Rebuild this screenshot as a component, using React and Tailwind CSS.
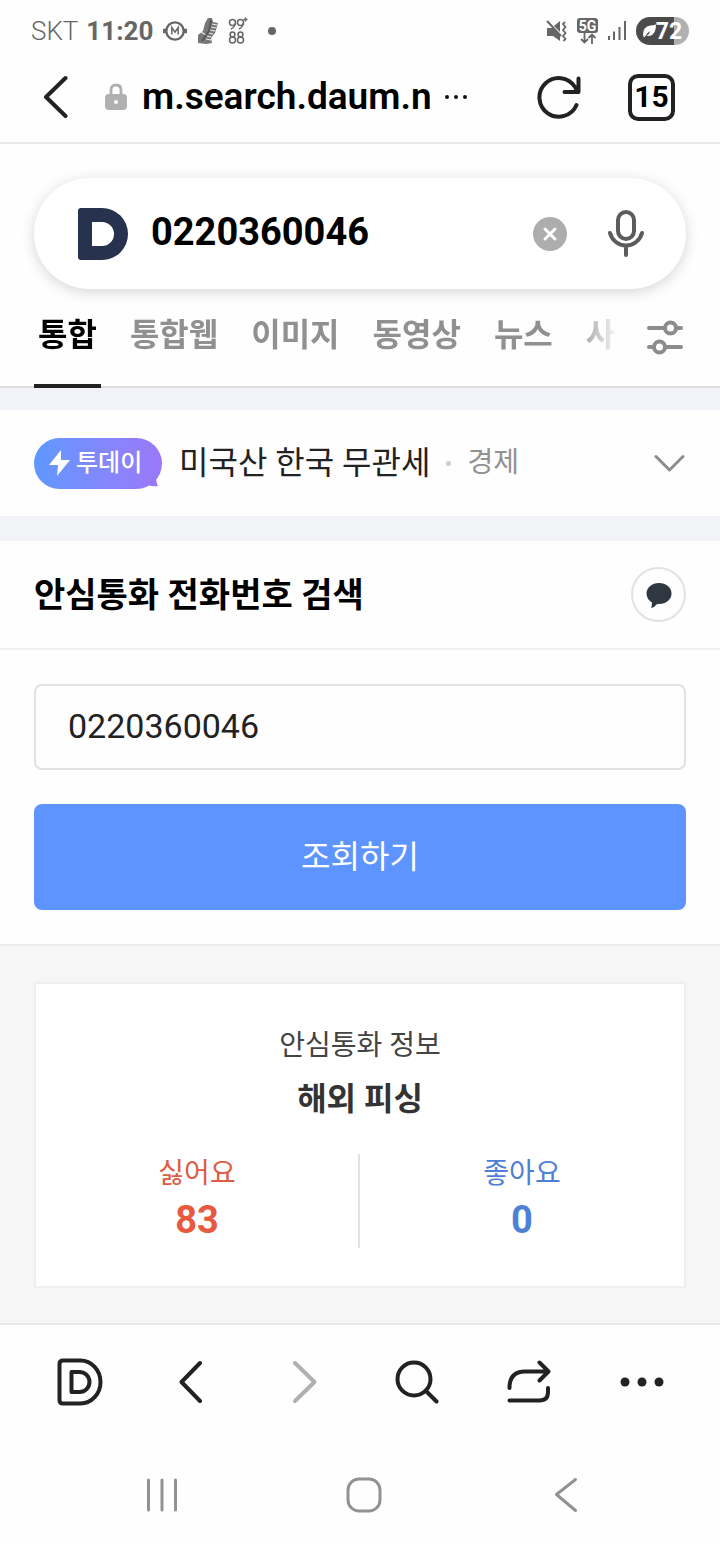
import { useState } from 'react';

const TABS = ['통합', '통합웹', '이미지', '동영상', '뉴스', '사'];

function StatusBar() {
  return (
    <div className="flex h-[62px] items-center justify-between pl-[31px] pr-[31px] text-[#666]">
      <div className="flex items-center gap-[9px] text-[26px] leading-8">
        <span className="flex gap-2">
          <span className="font-light">SKT</span>
          <span className="font-bold">11:20</span>
        </span>
        <svg width="26" height="24" viewBox="0 0 26 24" fill="none" stroke="currentColor">
          <circle cx="13" cy="12" r="8.7" strokeWidth="2.3" />
          <path d="M1 12h3M22 12h3" strokeWidth="4.5" />
          <path d="M9.8 15.5v-7l3.2 4.600 3.200-4.600v7" strokeWidth="1.5" />
        </svg>
        <svg width="22" height="28" viewBox="0 0 22 28">
          <path d="M11 1l4 0 1 4 5 1-3 10-4 5 1 5-6 1-8-1 0-8 5-4 2-8z" fill="#777" />
          <path d="M15 7l5 1M14 10l5 1M13 13l5 1M12 16l4 1M10 19l4 1M9 22l5 1M4 15l5 3" stroke="#e8e8e8" strokeWidth="1.1" fill="none" />
          <path d="M14 3l-2 11-7 10" stroke="#555" strokeWidth="1.800" fill="none" />
        </svg>
        <svg width="21" height="28" viewBox="0 0 21 28" fill="none" stroke="currentColor" strokeWidth="1.5">
          <circle cx="4.5" cy="5.5" r="3" />
          <circle cx="12.5" cy="5.5" r="3" />
          <path d="M7.5 6Q7 10 3 12M15.5 6Q15 10 11 12M15.5 2.5h4M17.500 .5v4" />
          <circle cx="4.500" cy="17.500" r="2.400" />
          <circle cx="12.500" cy="17.500" r="2.400" />
          <circle cx="4.500" cy="23" r="3" />
          <circle cx="12.500" cy="23" r="3" />
        </svg>
        <svg width="28" height="10" viewBox="0 0 28 10">
          <circle cx="14" cy="5" r="4" fill="currentColor" />
        </svg>
      </div>
      <div className="flex items-center gap-[10px]">
        <svg width="21" height="22" viewBox="0 0 21 22" fill="none" stroke="currentColor">
          <path d="M1 8h4l2 0 7 7v6l-7-5H1z" fill="currentColor" stroke="none" />
          <path d="M8 6l6-5v11z" fill="currentColor" stroke="none" />
          <path d="M1 1l14 15" strokeWidth="2" />
          <path d="M19 2l-2 2 2.500 3-2.500 3 2.500 3-2.500 3 2.500 3-2 2" strokeWidth="1.800" />
        </svg>
        <span className="flex flex-col items-center">
          <span className="flex h-[15px] w-[21px] items-center justify-center rounded-[3px] bg-[#666] text-[14px] font-bold leading-none text-white">5G</span>
          <svg width="18" height="11" viewBox="0 0 18 11" fill="none" stroke="currentColor" strokeWidth="1.800">
            <path d="M5.500 0v9M2 6l3.500 3.500L9 6M13 11V2M9.500 5L13 1.500 16.500 5" />
          </svg>
        </span>
        <svg width="18" height="22" viewBox="0 0 18 22" stroke="currentColor" strokeWidth="2">
          <path d="M1 16v4M6 11.500V20M11.500 7v13M17 1v19" />
        </svg>
        <span className="flex h-7 w-[53px] items-center justify-center rounded-full bg-gradient-to-r from-[#4b4b4b] from-72% to-[#b0b0b0] to-72% text-[23px] font-bold leading-none text-white">
          <svg width="13" height="16" viewBox="0 0 14 16">
            <path d="M0 12Q0 3 8 2 11 2 14 1q0 8-4 11-3 2-6 1Q7 11 8 8 4 10 3 13l-2 2z" fill="#fff" />
          </svg>
          72
        </span>
      </div>
    </div>
  );
}

function AddressBar() {
  return (
    <header className="flex h-[82px] items-center border-b-2 border-[#e8e8e8] pb-[10px] pl-[42px] pr-[45px]">
      <button aria-label="뒤로">
        <svg width="26" height="44" viewBox="0 0 26 44" fill="none" stroke="#222" strokeWidth="4" strokeLinecap="round" strokeLinejoin="round">
          <path d="M23.500 3L4 22l19.500 19" />
        </svg>
      </button>
      <button className="ml-[37px] flex min-w-0 flex-1 items-center text-left">
        <svg className="shrink-0" width="22" height="28" viewBox="0 0 22 28">
          <path d="M6 12V7q0-5 5-5t5 5v5" fill="none" stroke="#b0b0b0" strokeWidth="2.800" />
          <rect y="11" width="22" height="16" rx="4" fill="#b0b0b0" />
          <circle cx="11" cy="19" r="2" fill="#fff" />
        </svg>
        <span className="ml-[15px] text-[37px] font-semibold leading-[44px] text-black">m.search.daum.n</span>
        <svg className="ml-3 shrink-0" width="24" height="6" viewBox="0 0 24 6" fill="#111">
          <circle cx="3" cy="3" r="2" />
          <circle cx="12" cy="3" r="2" />
          <circle cx="21" cy="3" r="2" />
        </svg>
      </button>
      <button aria-label="새로고침">
        <svg width="44" height="44" viewBox="0 0 44 44" fill="none" stroke="#222" strokeWidth="4" strokeLinecap="round" strokeLinejoin="round">
          <path d="M39.500 30A19.300 19.300 0 1 1 38 12l3 5M41.500 3.500V17H27.500" />
        </svg>
      </button>
      <button className="ml-[47px] flex size-[47px] items-center justify-center rounded-[10px] border-4 border-[#222] text-[30px] font-bold leading-none text-black">
        15
      </button>
    </header>
  );
}

function SearchBox() {
  const [query, setQuery] = useState('0220360046');
  return (
    <form className="mx-[34px] mt-[34px] flex h-[111px] items-center rounded-full bg-white pl-[44px] pr-[41px] shadow-[0_3px_14px_rgba(0,0,0,0.16)]" onSubmit={(e) => e.preventDefault()}>
      <svg className="shrink-0" width="50" height="52" viewBox="0 0 50 52">
        <path d="M3 0H24a26 26 0 0 1 0 52H3a3 3 0 0 1-3-3V3a3 3 0 0 1 3-3zM14 14V38H24a12 12 0 0 0 0-24z" fill="#27324f" fillRule="evenodd" />
      </svg>
      <input
        aria-label="검색어"
        className="ml-[23px] min-w-0 flex-1 pb-[3px] text-[38px] font-bold leading-[46px] text-black outline-none"
        value={query}
        onChange={(e) => setQuery(e.target.value)}
      />
      <button type="button" aria-label="지우기" onClick={() => setQuery('')}>
        <svg width="34" height="34" viewBox="0 0 34 34">
          <circle cx="17" cy="17" r="17" fill="#adadad" />
          <path d="M12 12l10 10M22 12L12 22" stroke="#fff" strokeWidth="3" strokeLinecap="round" />
        </svg>
      </button>
      <button type="button" className="ml-10" aria-label="음성 검색">
        <svg width="38" height="48" viewBox="0 0 38 48" fill="none" stroke="#5c5c5c" strokeWidth="4" strokeLinecap="round">
          <rect x="11" y="2" width="16" height="27" rx="8" />
          <path d="M3 23a16.500 16.500 0 0 0 32 0M19 36v9" />
        </svg>
      </button>
    </form>
  );
}

function Tabs() {
  const [active, setActive] = useState('통합');
  return (
    <div className="flex h-[99px] shadow-[inset_0_-2px_0_#dcdde1]">
      <nav className="ml-[34px] flex min-w-0 flex-1 gap-[25px] overflow-hidden [mask-image:linear-gradient(to_right,black_calc(100%-46px),transparent)]">
        {TABS.map((tab) => (
          <a
            key={tab}
            href="#"
            onClick={() => setActive(tab)}
            className={`shrink-0 border-b-4 px-1 pt-[22px] text-[32px] font-bold leading-[48px] ${
              tab === active ? 'border-[#222] text-black' : 'border-transparent text-[#909090]'
            }`}
          >
            {tab}
          </a>
        ))}
      </nav>
      <button className="pb-1 pl-[26px] pr-9" aria-label="검색 옵션">
        <svg width="38" height="36" viewBox="0 0 38 36" fill="none" stroke="#8c8c8c" strokeWidth="4" strokeLinecap="round">
          <path d="M3 9h15M31 9h4M3 28h4M20 28h15" />
          <circle cx="24.500" cy="9" r="5.500" />
          <circle cx="13.500" cy="28" r="5.500" />
        </svg>
      </button>
    </div>
  );
}

function TodayRow() {
  return (
    <section className="flex h-[106px] items-center px-[34px]">
      <a href="#" className="relative flex h-[51px] w-32 shrink-0 items-center gap-[6px] rounded-full bg-gradient-to-r from-[#5c98ff] to-[#9b78f9] pl-[15px] text-2xl font-medium text-white">
        <svg width="21" height="26" viewBox="0 0 21 26" fill="#fff">
          <path d="M12 0L0 15h9L8 26 21 10h-9z" />
        </svg>
        투데이
        <svg className="absolute bottom-[2px] right-[2px]" width="20" height="18" viewBox="0 0 20 18" fill="#987af9">
          <path d="M0 15L15 0Q16 14 18 17 13 18 8 16z" />
        </svg>
      </a>
      <span className="ml-[17px] text-[32px] leading-[48px] text-[#222]">미국산 한국 무관세</span>
      <span className="ml-4 size-[5px] rounded-full bg-[#ccc]" />
      <span className="ml-4 text-[28px] leading-[42px] text-[#919191]">경제</span>
      <button className="ml-auto" aria-label="펼치기">
        <svg width="32" height="20" viewBox="0 0 32 20" fill="none" stroke="#8c8c8c" strokeWidth="3" strokeLinecap="round" strokeLinejoin="round">
          <path d="M2 3.500L15.500 17 29 3.500" />
        </svg>
      </button>
    </section>
  );
}

function PhoneLookup() {
  const [phone, setPhone] = useState('0220360046');
  return (
    <section>
      <div className="flex h-[109px] items-center justify-between border-b-2 border-[#f0f0f0] px-[34px]">
        <h2 className="text-[34px] font-bold leading-[50px] text-black">안심통화 전화번호 검색</h2>
        <button className="flex size-[55px] items-center justify-center rounded-full border-2 border-[#e2e2e2]" aria-label="의견 보내기">
          <svg width="26" height="26" viewBox="0 0 26 26" fill="#2f3740">
            <path d="M13 1c7 0 12.500 4.500 12.500 10.500S20 22 13 22h-2q-2 3-6 4 1-2 1-5.500Q.5 17 .5 11.500C.5 5.500 6 1 13 1z" />
          </svg>
        </button>
      </div>
      <form className="flex flex-col gap-[34px] px-[34px] py-[34px]" onSubmit={(e) => e.preventDefault()}>
        <input
          aria-label="전화번호"
          className="h-[86px] w-full rounded-lg border-2 border-[#e2e2e2] px-8 pb-[2px] text-[34px] leading-[40px] text-[#222] outline-none"
          value={phone}
          onChange={(e) => setPhone(e.target.value)}
        />
        <button className="h-[106px] w-full rounded-lg bg-[#5e94ff] text-[32px] leading-[48px] text-white">조회하기</button>
      </form>
      <div className="border-t-2 border-[#ededed] bg-[#f6f6f6] px-[34px] pb-[35px] pt-9">
        <div className="border-2 border-[#efefef] bg-white pb-[38px] pt-10 text-center">
          <p className="text-[28px] leading-[44px] text-[#444]">안심통화 정보</p>
          <p className="mt-[7px] text-[32px] font-bold leading-[48px] text-[#333]">해외 피싱</p>
          <dl className="mt-[31px] grid h-[94px] grid-cols-2 divide-x-2 divide-[#e2e2e2] text-[28px]">
            <div className="text-[#dd5c44]">
              <dt className="leading-[40px]">싫어요</dt>
              <dd className="text-[38px] font-bold leading-[52px] text-[#e85a40]">83</dd>
            </div>
            <div className="text-[#4f80d8]">
              <dt className="leading-[40px]">좋아요</dt>
              <dd className="text-[38px] font-bold leading-[52px]">0</dd>
            </div>
          </dl>
        </div>
      </div>
    </section>
  );
}

function Toolbar() {
  return (
    <nav className="grid h-[116px] grid-cols-6 border-t-2 border-[#e9e9e9] pl-6 pr-[22px] *:flex *:items-center *:justify-center">
      <button aria-label="홈">
        <svg width="46" height="48" viewBox="0 0 46 48" fill="none" stroke="#222" strokeWidth="4" strokeLinejoin="round">
          <path d="M6 2.500h17.500a20 21.500 0 0 1 0 43H6q-3.500 0-3.500-3.500V6q0-3.500 3.500-3.500z" />
          <path d="M14.500 14h8a10 10 0 0 1 0 20h-8z" />
        </svg>
      </button>
      <button aria-label="이전">
        <svg width="26" height="44" viewBox="0 0 26 44" fill="none" stroke="#222" strokeWidth="4" strokeLinecap="round" strokeLinejoin="round">
          <path d="M21 3L2.500 22 21 41" />
        </svg>
      </button>
      <button aria-label="다음">
        <svg width="26" height="44" viewBox="0 0 26 44" fill="none" stroke="#b0b0b0" strokeWidth="4" strokeLinecap="round" strokeLinejoin="round">
          <path d="M3 3l19.500 19L3 41" />
        </svg>
      </button>
      <button aria-label="검색">
        <svg width="44" height="44" viewBox="0 0 44 44" fill="none" stroke="#222" strokeWidth="4" strokeLinecap="round">
          <circle cx="19" cy="19" r="16.500" />
          <path d="M31 31l10.500 10.500" />
        </svg>
      </button>
      <button aria-label="공유">
        <svg width="44" height="44" viewBox="0 0 44 44" fill="none" stroke="#222" strokeWidth="4" strokeLinecap="round" strokeLinejoin="round">
          <path d="M2.500 28Q2.500 11.500 18 11.500h23M32.500 2.500l9 9-9 9M2.500 40.500h30q8.500 0 8.500-8.500v-4" />
        </svg>
      </button>
      <button aria-label="더보기">
        <svg width="44" height="10" viewBox="0 0 44 10" fill="#222">
          <circle cx="5" cy="5" r="4.500" />
          <circle cx="22" cy="5" r="4.500" />
          <circle cx="39" cy="5" r="4.500" />
        </svg>
      </button>
    </nav>
  );
}

function SystemNav() {
  return (
    <div className="grid h-[105px] grid-cols-3 pl-[61px] pr-[53px] pt-[6px] *:flex *:items-center *:justify-center">
      <button aria-label="최근 앱">
        <svg width="32" height="34" viewBox="0 0 32 34" stroke="#929292" strokeWidth="3" strokeLinecap="round">
          <path d="M2.500 2v30M16 2v30M29.500 2v30" />
        </svg>
      </button>
      <button aria-label="홈 화면">
        <svg width="36" height="36" viewBox="0 0 36 36" fill="none" stroke="#929292" strokeWidth="3">
          <rect x="2" y="2" width="32" height="32" rx="11" />
        </svg>
      </button>
      <button aria-label="뒤로 가기">
        <svg width="24" height="36" viewBox="0 0 24 36" fill="none" stroke="#929292" strokeWidth="3" strokeLinecap="round" strokeLinejoin="round">
          <path d="M21.500 2.500L2.500 17.500l19 16" />
        </svg>
      </button>
    </div>
  );
}

export default function App() {
  return (
    <div className="w-full bg-[#fefefe] font-['Roboto','Noto_Sans_CJK_KR',sans-serif]">
      <StatusBar />
      <AddressBar />
      <main>
        <SearchBox />
        <Tabs />
        <div className="h-[22px] bg-[#f2f3f8]" />
        <TodayRow />
        <div className="h-[25px] bg-[#f2f3f7]" />
        <PhoneLookup />
      </main>
      <Toolbar />
      <SystemNav />
    </div>
  );
}
